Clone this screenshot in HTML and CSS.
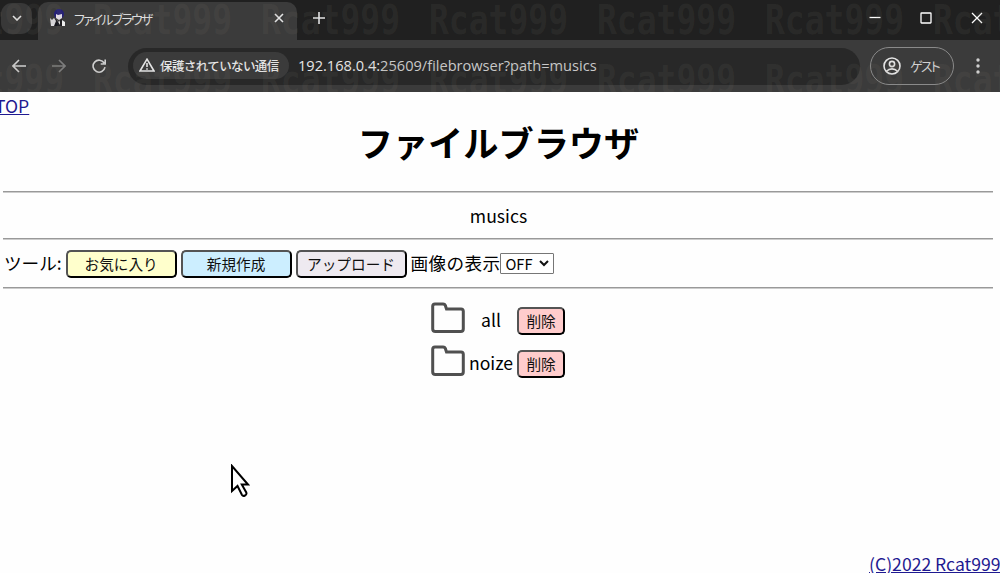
FILE: index.html
```html
<!DOCTYPE html>
<html lang="ja">
  <head>
    <meta charset="UTF-8" />
    <meta name="viewport" content="width=device-width, initial-scale=1.0" />
    <title>ファイルブラウザ</title>
    <link rel="stylesheet" href="styles.css">
  </head>
  <body>
    <div class="browser">
      <div class="tabbar">
        <div class="tab-search">
          <svg width="10" height="6" viewBox="0 0 10 6"><path d="M1 1l4 4 4-4" /></svg>
        </div>
        <div class="tab">
          <svg class="favicon" width="18" height="18" viewBox="0 0 18 18">
            <circle cx="10" cy="5" r="5" fill="#252078" />
            <path d="M7 5l2 1 4-1v4l-3 2-3-2z" fill="#e9e4ee" />
            <path d="M6 10l3 2 4-2 3 7H5z" fill="#15151c" />
            <path d="M1 9l2 2 2-2 2 3-2 5H2z" fill="#dcdce0" />
            <path d="M13 11l3 2v4h-3zM8 11l2 2 1-2v5z" fill="#eee" />
          </svg>
          <span class="tab-title">ファイルブラウザ</span>
          <svg class="tab-close" width="10" height="10" viewBox="0 0 10 10"><path d="M1 1l8 8M9 1L1 9" /></svg>
        </div>
        <svg class="new-tab" width="12" height="12" viewBox="0 0 12 12"><path d="M6 0v12M0 6h12" /></svg>
        <div class="window-buttons">
          <svg width="12" height="12" viewBox="0 0 12 12"><path d="M0.5 5.5h11" /></svg>
          <svg width="12" height="12" viewBox="0 0 12 12"><rect x="1" y="1" width="10" height="10" rx="0.5" /></svg>
          <svg width="12" height="12" viewBox="0 0 12 12"><path d="M1 1l10 10M11 1L1 11" /></svg>
        </div>
      </div>
      <div class="toolbar">
        <svg class="nav-icon" width="14" height="14" viewBox="0 0 14 14"><path d="M14 7H1M7 1L1 7l6 6" /></svg>
        <svg class="nav-icon disabled" width="14" height="14" viewBox="0 0 14 14"><path d="M0 7h13M7 1l6 6-6 6" /></svg>
        <svg class="nav-icon" width="14" height="14" viewBox="0 0 14 14"><path d="M12.2 4A6 6 0 1 0 13 8.2M13.2 0.5V5H8.7" /></svg>
        <div class="address">
          <div class="security">
            <svg width="16" height="14" viewBox="0 0 16 14"><path d="M8 1.2L15 13H1zM8 5v4M8 10.3v1.4" /></svg>
            <span>保護されていない通信</span>
          </div>
          <span class="url"><b>192.168.0.4:</b>25609/filebrowser?path=musics</span>
        </div>
        <div class="profile">
          <svg width="18" height="18" viewBox="0 0 18 18"><circle cx="9" cy="9" r="8" /><circle cx="9" cy="7" r="2.6" /><path d="M3.5 14.3c3-3.2 8-3.2 11 0" /></svg>
          <span>ゲスト</span>
        </div>
        <svg class="menu-icon" width="4" height="16" viewBox="0 0 4 16"><circle cx="2" cy="2" r="1.7" /><circle cx="2" cy="8" r="1.7" /><circle cx="2" cy="14" r="1.7" /></svg>
      </div>
      <div class="watermark">
        <div class="watermark-row"><span>Rcat999</span><span>Rcat999</span><span>Rcat999</span><span>Rcat999</span><span>Rcat999</span><span>Rcat999</span><span>Rcat999</span></div>
        <div class="watermark-row"><span>Rcat999</span><span>Rcat999</span><span>Rcat999</span><span>Rcat999</span><span>Rcat999</span><span>Rcat999</span><span>Rcat999</span></div>
      </div>
    </div>

    <div class="page">
      <a class="top-link" href="#">TOP</a>
      <h1>ファイルブラウザ</h1>
      <hr />
      <div class="path">musics</div>
      <hr />
      <div class="tools">
        ツール:
        <button class="favorite">お気に入り</button>
        <button class="create">新規作成</button>
        <button class="upload">アップロード</button>
        <span class="image-label">画像の表示</span><div class="select">OFF<svg width="10" height="7" viewBox="0 0 10 7"><path d="M1 1l4 4 4-4" /></svg></div>
      </div>
      <hr />
      <table class="files">
        <tr>
          <td><svg class="folder" width="34" height="32" viewBox="0 0 34 32"><path d="M4 2h8q2 0 2.5 2l1 3H30q2.3 0 2.3 2.3V27q0 2.6-2.6 2.6H4.3Q1.7 29.6 1.7 27V4.3Q1.7 2 4 2z" /></svg></td>
          <td class="name">all</td>
          <td><button class="delete">削除</button></td>
        </tr>
        <tr>
          <td><svg class="folder" width="34" height="32" viewBox="0 0 34 32"><path d="M4 2h8q2 0 2.5 2l1 3H30q2.3 0 2.3 2.3V27q0 2.6-2.6 2.6H4.3Q1.7 29.6 1.7 27V4.3Q1.7 2 4 2z" /></svg></td>
          <td class="name">noize</td>
          <td><button class="delete">削除</button></td>
        </tr>
      </table>
      <a class="copyright" href="#">(C)2022 Rcat999</a>
    </div>

    <svg class="cursor" width="20" height="34" viewBox="0 0 20 34">
      <path d="M2 2v25l5.5-5 4.5 9q1 1.5 3 .5t1.3-3l-4.5-8H18z" />
    </svg>
  </body>
</html>
```

FILE: styles.css
```css
* {
  box-sizing: border-box;
}
body {
  margin: 0;
  height: 573px;
  overflow: hidden;
  position: relative;
  background-color: #fefefe;
  color: #000;
  font-family: "Noto Sans CJK JP", sans-serif;
  font-size: 17.6px;
}
svg {
  fill: none;
  stroke: #e3e3e3;
  stroke-width: 1.6;
  flex-shrink: 0;
}

/* browser window */
.browser {
  position: relative;
  height: 92px;
  overflow: hidden;
  background-color: #202020;
}
.tabbar {
  display: flex;
  align-items: center;
  height: 40px;
  padding-bottom: 4px;
}
.tab-search {
  display: flex;
  align-items: center;
  justify-content: center;
  width: 31px;
  height: 31px;
  margin-left: 1px;
  border-radius: 11px;
  background-color: #383838;
}
.tab {
  display: flex;
  align-items: center;
  align-self: flex-start;
  width: 259px;
  height: 38px;
  margin: 2px 0 0 6px;
  padding: 0 13px 6px 11px;
  border-radius: 10px 10px 0 0;
  background-color: #3b3b3b;
}
.favicon {
  stroke: none;
}
.tab-title {
  margin-left: 7px;
  color: #dedede;
  font-size: 13px;
  font-feature-settings: "palt";
  letter-spacing: -1.8px;
}
.tab-close {
  margin-left: auto;
}
.new-tab {
  margin-left: 16px;
}
.window-buttons {
  display: flex;
  gap: 39px;
  margin: 0 17px 0 auto;
}
.window-buttons svg {
  stroke: #fff;
  stroke-width: 1.3;
}
.toolbar {
  display: flex;
  align-items: center;
  height: 52px;
  padding: 0 20px 0 12px;
  background-color: #3b3b3b;
}
.nav-icon {
  margin-right: 26px;
  stroke: #cfcfcf;
}
.disabled {
  stroke: #7d7d7d;
}
.address {
  display: flex;
  align-items: center;
  width: 732px;
  height: 37px;
  margin-left: -4px;
  padding: 0 0 2px 5px;
  border-radius: 19px;
  background-color: #282828;
}
.security {
  display: flex;
  align-items: center;
  gap: 5px;
  width: 156px;
  height: 27px;
  padding-left: 6px;
  border-radius: 14px;
  background-color: #3b3b3b;
  color: #e6e6e6;
  font-size: 12.5px;
  font-weight: 500;
  letter-spacing: -0.6px;
  white-space: nowrap;
}
.url {
  margin-left: 9px;
  color: #c9c9c9;
  font-family: "Open Sans", "Noto Sans", sans-serif;
  font-size: 14.6px;
}
.url b {
  color: #e6e6e6;
  font-weight: normal;
}
.profile {
  display: flex;
  align-items: center;
  width: 84px;
  height: 38px;
  margin-left: 10px;
  padding: 0 0 1px 12px;
  border: 1px solid #8a8a8a;
  border-radius: 19px;
  color: #d0d0d0;
  font-size: 13px;
}
.profile span {
  margin-left: 9px;
  font-feature-settings: "palt";
  letter-spacing: -1.8px;
}
.menu-icon {
  margin-left: auto;
  fill: #d0d0d0;
  stroke: none;
}
.watermark {
  position: absolute;
  top: 0;
  left: -75px;
  transform: scaleY(1.22);
  transform-origin: top;
  pointer-events: none;
}
.watermark-row {
  display: flex;
  height: 49px;
  color: rgba(135, 130, 118, 0.11);
  font: bold 33px/34px "DejaVu Sans Mono", monospace;
}
.watermark-row span {
  flex: none;
  width: 168px;
}

/* file browser page */
.page {
  position: relative;
  height: 481px;
  padding: 0 7px 0 3px;
}
.page a {
  color: #1f1a91;
  line-height: 26px;
}
.top-link {
  position: absolute;
  top: 1px;
  left: -5px;
}
h1 {
  margin: 0;
  padding: 24px 0 0 1px;
  text-align: center;
  font-size: 35.2px;
  line-height: 51px;
}
hr {
  height: 2px;
  margin: 0;
  border: none;
  border-top: 1px solid #999;
  background-color: #ccc;
}
h1 + hr {
  margin-top: 24px;
}
.path {
  height: 45px;
  padding-left: 1px;
  line-height: 46px;
  text-align: center;
}
.tools {
  height: 47px;
  padding-left: 1px;
  line-height: 45px;
  white-space: nowrap;
}
.image-label {
  letter-spacing: 0.4px;
}
button {
  height: 28px;
  padding: 0;
  border: 2px outset #000;
  border-radius: 5px;
  color: #111;
  font-family: inherit;
  font-size: 14.67px;
  line-height: 22px;
}
.tools button {
  width: 111px;
}
.favorite {
  background-color: #ffffcc;
}
.create {
  background-color: #cceeff;
}
.upload {
  background-color: #eeeaf0;
}
.select {
  display: inline-flex;
  align-items: center;
  justify-content: space-between;
  width: 54px;
  height: 21px;
  padding: 0 4px;
  border: 1px solid #767676;
  border-radius: 1px;
  background-color: #fff;
  font-size: 14.67px;
  line-height: 19px;
}
.select svg {
  stroke: #111;
  stroke-width: 2;
}
.files {
  margin: 9px auto 0;
  border-spacing: 4px 0;
}
.files td {
  height: 43px;
  padding: 0;
  vertical-align: middle;
}
.name {
  text-align: center;
}
.folder {
  display: block;
  margin-bottom: 3px;
  stroke: #505050;
  stroke-width: 3;
}
.delete {
  display: block;
  width: 48px;
  margin-top: 2px;
  background-color: #ffcccc;
}
.copyright {
  position: absolute;
  top: 459px;
  left: 869px;
  white-space: nowrap;
}
.cursor {
  position: absolute;
  top: 464px;
  left: 230px;
  fill: #fff;
  stroke: #000;
  stroke-width: 2;
}
```
